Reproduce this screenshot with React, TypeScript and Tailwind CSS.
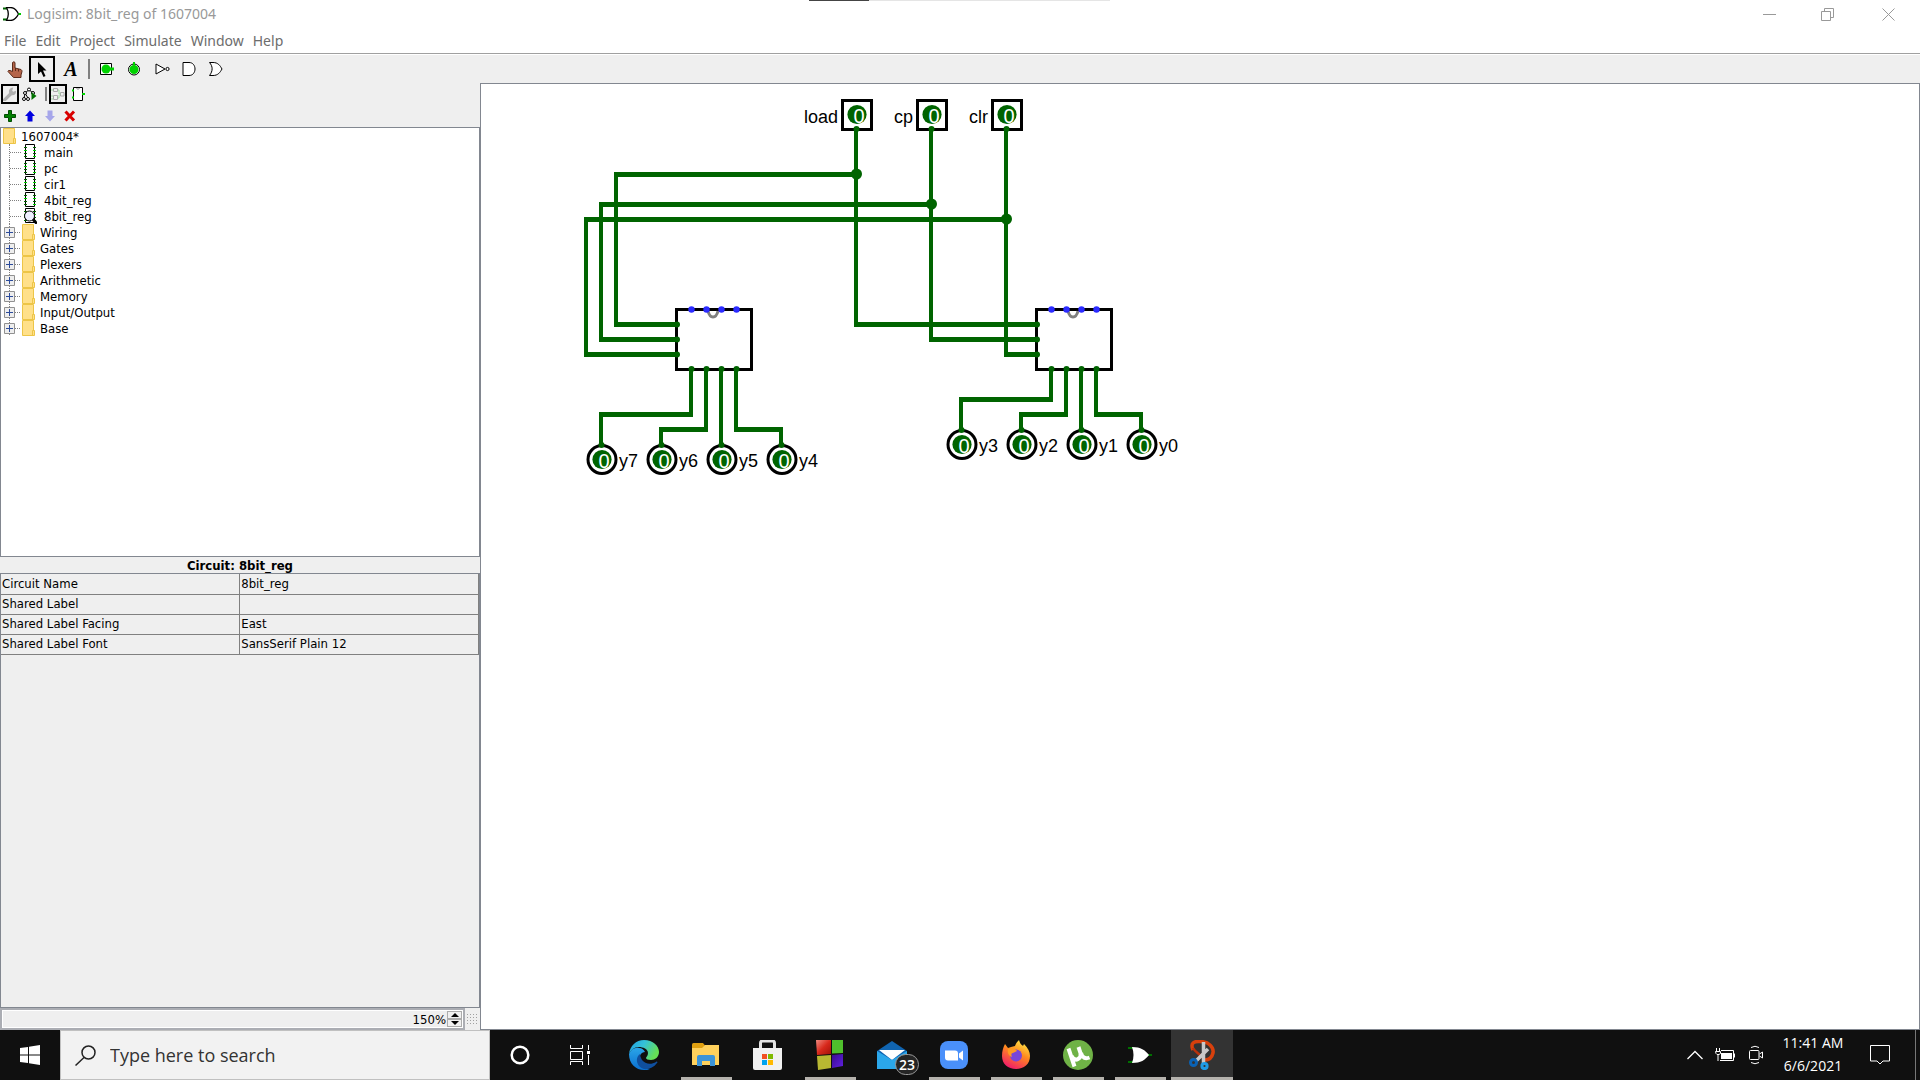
import React from "react";

const TAHOMA = "font-['DejaVu_Sans_Condensed','Noto_Sans',sans-serif]";

function OrGate({ className = "" }: { className?: string }) {
  return (
    <svg width="18" height="14" viewBox="0 0 18 14" className={className} fill="none">
      <path d="M0 1.500h4M0 12.500h4" stroke="#006400" strokeWidth="2" />
      <path d="M3.5 .5H8c4 .5 6 3 7.500 6.500C14 10 12 13 8 13.500H3.500C6 9 6 5 3.500 .5z" fill="#fff" stroke="#000" strokeWidth="1.300" />
      <path d="M15.500 7H18" stroke="#00c800" strokeWidth="2" />
    </svg>
  );
}

function TitleBar() {
  return (
    <header className="relative flex h-[28px] shrink-0 items-center bg-white pl-[3px]">
      <OrGate />
      <h1 className="ml-[6px] font-['Noto_Sans',sans-serif] text-[14px] leading-5 text-[#999]">Logisim: 8bit_reg of 1607004</h1>
      <div className="absolute left-[809px] top-0 flex h-px w-[301px] bg-[#e5e5e5]">
        <div className="h-px w-[60px] bg-[#444]" />
      </div>
      <div className="ml-auto flex h-full text-[#999]">
        <button aria-label="Minimize" className="flex w-[58px] items-center justify-center">
          <svg width="13" height="13" viewBox="0 0 13 13"><path d="M0 6.500h13" stroke="currentColor" /></svg>
        </button>
        <button aria-label="Restore" className="flex w-[58px] items-center justify-center">
          <svg width="13" height="13" viewBox="0 0 13 13" fill="none" stroke="currentColor"><path d="M.5 3.500h9v9h-9zM3.500 3V.5h9v9h-3" /></svg>
        </button>
        <button aria-label="Close" className="flex w-[64px] items-center justify-center">
          <svg width="13" height="13" viewBox="0 0 13 13"><path d="M.5.5l12 12M12.500.5l-12 12" stroke="currentColor" /></svg>
        </button>
      </div>
    </header>
  );
}

function MenuBar() {
  return (
    <nav className="flex h-[26px] shrink-0 items-center gap-[9px] border-b border-[#a0a0a0] bg-white pl-[4px] pt-px font-['Noto_Sans',sans-serif] text-[14px] leading-5 text-[#6d6d6d]">
      {["File", "Edit", "Project", "Simulate", "Window", "Help"].map((m) => (
        <button key={m}>{m}</button>
      ))}
    </nav>
  );
}

function Tool({ label, selected, children }: { label: string; selected?: boolean; children: React.ReactNode }) {
  return (
    <button
      aria-label={label}
      className={selected ? "flex h-[26px] w-[26px] items-center justify-center border-2 border-black" : "flex h-[26px] w-[26px] items-center justify-center"}
    >
      {children}
    </button>
  );
}

function MainToolbar() {
  return (
    <div className="mt-px flex h-[28px] shrink-0 items-center gap-px bg-[#efefef] pl-[2px]">
      <Tool label="Poke">
        <svg width="16" height="17" viewBox="0 0 16 17">
          <path d="M5.500 1.500q1.500-1.500 2.500 0V7l6 1.500q1 .5 1 2L14 14v2.500H6.500L1 10.500q0-1.500 2-1l2.500 1z" fill="#b5654a" stroke="#5a2a1a" />
          <path d="M8.500 7v3M11.500 8v2.500" stroke="#5a2a1a" />
        </svg>
      </Tool>
      <Tool label="Select" selected>
        <svg width="10" height="15" viewBox="0 0 10 15"><path d="M1 0v12l3-2.500L6.500 15 8.500 14 6 8.500h3.500z" /></svg>
      </Tool>
      <span className="w-px" />
      <Tool label="Text">
        <span className="font-['Liberation_Serif',serif] text-[20px] font-bold italic leading-none text-black">A</span>
      </Tool>
      <span className="mx-[3px] h-5 w-[2px] bg-[#808080]" />
      <Tool label="Input pin">
        <svg width="14" height="12" viewBox="0 0 14 12"><path d="M.5.500h11v11H.5z" fill="#fff" stroke="#000" /><circle cx="6" cy="6" r="4.500" fill="#00d200" /><path d="M9 6h5" stroke="#00d200" strokeWidth="3" /></svg>
      </Tool>
      <Tool label="Output pin">
        <svg width="14" height="14" viewBox="0 0 14 14"><circle cx="7" cy="7.500" r="5.500" fill="#fff" stroke="#000" /><circle cx="7" cy="7.500" r="4.500" fill="#00d200" /><path d="M7 0v5" stroke="#00d200" strokeWidth="2" /></svg>
      </Tool>
      <span />
      <Tool label="NOT gate">
        <svg width="15" height="12" viewBox="0 0 15 12" fill="#fff" stroke="#000"><path d="M1 1v10L10 6z" /><circle cx="12.500" cy="6" r="1.600" /></svg>
      </Tool>
      <div className="flex w-[53px]">
        <Tool label="AND gate">
          <svg width="14" height="14" viewBox="0 0 14 14" fill="#fff" stroke="#000"><path d="M1 .5h6c8 0 8 13 0 13H1z" /></svg>
        </Tool>
        <span className="w-[2px]" />
        <Tool label="OR gate">
          <svg width="14" height="14" viewBox="0 0 14 14" fill="#fff" stroke="#000"><path d="M.5.500H4c5 0 7 3 9 6.500-2 3.500-4 6.500-9 6.500H.5c3.500-4.500 3.500-9 0-13z" /></svg>
        </Tool>
      </div>
    </div>
  );
}

function ExplorerToolbars() {
  return (
    <>
      <div className="flex h-5 shrink-0 items-center pl-px">
        <button aria-label="Show toolbox" className="flex h-5 w-[18px] items-center justify-center border-2 border-black">
          <svg width="14" height="14" viewBox="0 0 13 13"><path d="M1.500 12 7 6.500" stroke="#b0b0b0" strokeWidth="3" strokeLinecap="round" /><path d="M12 3.500 9.500 4.500 8.500 3.500 9.500.5Q5 1 5.500 5 7 8 10 7.500 12.500 6.500 12 3.500z" fill="#b0b0b0" /></svg>
        </button>
        <button aria-label="Show simulation tree" className="flex w-[22px] justify-center">
          <svg width="16" height="14" viewBox="0 0 16 14" fill="#fff" stroke="#000"><path d="M6 3.500 3 6M8 3.500 11 6M3 7 2 11M3.500 7 6 11" /><circle cx="7" cy="2.500" r="1.500" /><circle cx="3" cy="6" r="1.500" /><circle cx="2" cy="12" r="1.500" /><circle cx="6" cy="12" r="1.500" /><circle cx="11" cy="6" r="1.500" /><path d="M9.500 5v8l5-4z" fill="#007000" stroke="none" /></svg>
        </button>
        <span className="ml-1 mr-[2px] h-[14px] w-[2px] bg-[#808080]" />
        <button aria-label="Edit circuit layout" className="flex h-5 w-[18px] items-center justify-center border-2 border-black">
          <svg width="14" height="14" viewBox="0 0 14 14" fill="none" stroke="#aaa"><path d="M2.500 1.500h4v3h-4zM2.500 8.500h4v4h-4zM9.500 5.500h3.500v3.500H9.500z" /><path d="M0 3h2M0 9h2M0 12h2M7 3h1v4h1.500M7 11h1V8" stroke="#9fdc9f" /></svg>
        </button>
        <button aria-label="Edit appearance" className="flex w-[22px] justify-center">
          <svg width="14" height="16" viewBox="0 0 14 16"><path d="M2.500 1.500h9v13h-9z" fill="#fff" stroke="#000" /><path d="M5.500 2q1.500 3 3 0" fill="none" stroke="#808080" /><path d="M1 4.500h2M1 11.500h2M11 8h3" stroke="#00d200" strokeWidth="2" /></svg>
        </button>
      </div>
      <div className="flex h-[23px] shrink-0 items-center gap-2 pl-1">
        <button aria-label="Add circuit"><svg width="12" height="12" viewBox="0 0 12 12"><path d="M4.500.5h3v4h4v3h-4v4h-3v-4h-4v-3h4z" fill="#008000" stroke="#004d00" /></svg></button>
        <button aria-label="Move up"><svg width="12" height="12" viewBox="0 0 12 12"><path d="M6 .5 11 6H8.500v5.500h-5V6H1z" fill="#0000e0" /></svg></button>
        <button aria-label="Move down"><svg width="12" height="12" viewBox="0 0 12 12"><path d="M6 11.500 11 6H8.500V.5h-5V6H1z" fill="#a6a6ea" /></svg></button>
        <button aria-label="Delete"><svg width="12" height="12" viewBox="0 0 12 12"><path d="M1.500 1.500 10 10.500M10 1.500 1.500 10.500" stroke="#d80000" strokeWidth="3" /></svg></button>
      </div>
    </>
  );
}

function ChipIcon({ current }: { current?: boolean }) {
  return (
    <svg width="14" height="16" viewBox="0 0 14 16">
      <path d="M2.500.5h9v14h-9z" fill="#fff" stroke="#000" />
      <path d="M1 3.500h3M1 6.500h3M1 9.500h3M1 12.500h3M10 3.500h3M10 9.500h3" stroke="#006400" />
      <path d="M1 6.500h3M10 6.500h3M10 12.500h3" stroke="#00d200" />
      {current && <><circle cx="6.500" cy="8" r="5" fill="#eef" stroke="#000" /><path d="M10 11.500l4 4" stroke="#000" strokeWidth="3" /></>}
    </svg>
  );
}

function FolderIcon() {
  return (
    <svg width="13" height="16" viewBox="0 0 13 16"><path d="M.5.500h11v10h1v5H.5z" fill="#ffe08a" stroke="#edc547" /><path d="M10.500 15v-4.500H12" fill="none" stroke="#edc547" /></svg>
  );
}

const CIRCUITS = ["main", "pc", "cir1", "4bit_reg", "8bit_reg"];
const LIBRARIES = ["Wiring", "Gates", "Plexers", "Arithmetic", "Memory", "Input/Output", "Base"];

function Tree() {
  return (
    <div className="h-[430px] shrink-0 border border-[#828790] bg-white text-[13px] leading-4 text-black">
      <div className="flex h-4 items-center gap-[5px] pl-[2px]"><FolderIcon /><span className="pt-px">1607004*</span></div>
      <ul>
        {CIRCUITS.map((c) => (
          <li key={c} className="flex h-4 items-center pl-2">
            <span className="flex h-4 w-3 items-center border-l border-dotted border-[#808080]"><span className="w-full border-t border-dotted border-[#808080]" /></span>
            <span className="ml-[2px] mr-[7px]"><ChipIcon current={c === "8bit_reg"} /></span>
            <span className="pt-px">{c}</span>
          </li>
        ))}
        {LIBRARIES.map((l) => (
          <li key={l} className="flex h-4 items-center pl-[3px]">
            <button aria-label={"Expand " + l}>
              <svg width="11" height="16" viewBox="0 0 11 16"><path d="M5.500 0v16" stroke="#808080" strokeDasharray="1 1" /><path d="M.5 3.500h10v10H.5z" fill="#eee" stroke="#919191" /><path d="M2 8.500h7M5.500 5v7" stroke="#2b4b9b" /></svg>
            </button>
            <span className="mr-[2px] w-[5px] border-t border-dotted border-[#808080]" />
            <FolderIcon />
            <span className="ml-[5px] pt-px">{l}</span>
          </li>
        ))}
      </ul>
    </div>
  );
}

const ATTRIBUTES = [
  ["Circuit Name", "8bit_reg"],
  ["Shared Label", ""],
  ["Shared Label Facing", "East"],
  ["Shared Label Font", "SansSerif Plain 12"],
];

function Attributes() {
  return (
    <section className="flex min-h-0 flex-1 flex-col text-[13px] text-black">
      <h2 className="h-4 shrink-0 text-center font-bold leading-[18px]">Circuit: 8bit_reg</h2>
      <div className="flex-1 border border-[#828790]">
        <table className="w-full table-fixed border-collapse">
          <tbody>
            {ATTRIBUTES.map(([k, v]) => (
              <tr key={k} className="h-5 border-b border-[#808080]">
                <th scope="row" className="border-r border-[#808080] pl-px text-left font-normal leading-4">{k}</th>
                <td className="border-r border-[#808080] pl-px leading-4">{v}</td>
              </tr>
            ))}
          </tbody>
        </table>
      </div>
    </section>
  );
}

function ZoomBar() {
  return (
    <div className="flex h-[22px] shrink-0">
      <div className="flex flex-1 border-2 border-[#abadb3] bg-white p-px">
        <input aria-label="Zoom" defaultValue="150%" className="min-w-0 flex-1 bg-[#efefef] pr-px pt-px text-right text-[13px] text-black outline-none" />
        <div className="flex w-[15px] flex-col">
          <button aria-label="Zoom in" className="flex flex-1 items-center justify-center border border-[#acacac] bg-[#f0f0f0]"><svg width="8" height="4" viewBox="0 0 8 4"><path d="M0 4l4-4 4 4z" /></svg></button>
          <button aria-label="Zoom out" className="flex flex-1 items-center justify-center border border-[#acacac] bg-[#f0f0f0]"><svg width="8" height="4" viewBox="0 0 8 4"><path d="M0 0l4 4 4-4z" /></svg></button>
        </div>
      </div>
      <svg width="15" height="22" viewBox="0 0 15 22">
        {[6.5, 9.5, 12.5, 15.5].map((y) => <path key={y} d={`M2 ${y}h12`} stroke="#a0a0a0" strokeDasharray="1 2" />)}
      </svg>
    </div>
  );
}

function Zero({ x, y }: { x: number; y: number }) {
  return (
    <>
      <circle cx={x} cy={y} r="9.600" fill="#006400" />
      <text x={x + 2} y={y + 8} textAnchor="middle" fill="#fff" fontSize="20">0</text>
    </>
  );
}

function InputPin({ x, label }: { x: number; label: string }) {
  return (
    <g>
      <rect x={x - 13.5} y="16.500" width="29" height="29" fill="#fff" stroke="#000" strokeWidth="3" />
      <Zero x={x + 1} y={30.5} />
      <circle cx={x + 0.5} cy="45" r="3" fill="#006400" />
      <text x={x - 18} y="39" textAnchor="end">{label}</text>
    </g>
  );
}

function OutputPin({ x, y, label }: { x: number; y: number; label: string }) {
  return (
    <g>
      <circle cx={x + 1} cy={y - 0.5} r="14" fill="#fff" stroke="#000" strokeWidth="3" />
      <Zero x={x + 1} y={y - 0.5} />
      <circle cx={x + 0.5} cy={y - 15} r="3" fill="#006400" />
      <text x={x + 18} y={y + 7}>{label}</text>
    </g>
  );
}

function Register({ x }: { x: number }) {
  return (
    <g>
      <rect x={x + 0.5} y="225.500" width="75" height="60" fill="#fff" stroke="#000" strokeWidth="3" />
      <path d={`M${x + 32} 227q1.500 6 5 6t5-6`} fill="none" stroke="#808080" strokeWidth="3" />
      {[15, 30, 45, 60].map((d) => (
        <g key={d}>
          <circle cx={x + d + 0.5} cy="225.500" r="3.200" fill="#2b2bff" />
          <circle cx={x + d + 0.5} cy="285" r="3" fill="#006400" />
        </g>
      ))}
      {[240.5, 255.5, 270.5].map((y) => <circle key={y} cx={x + 1} cy={y} r="3" fill="#006400" />)}
    </g>
  );
}

/** Vertical runs as [x, top, bottom]. */
const VERTICALS = [
  [375, 45, 243], [450, 45, 258], [525, 45, 273],
  [135, 88, 243], [120, 118, 258], [105, 133, 273],
  [210, 285, 333], [120, 328, 361], [225, 285, 348], [180, 343, 361],
  [240, 285, 361], [255, 285, 348], [300, 343, 361],
  [570, 285, 318], [480, 313, 346], [585, 285, 333], [540, 328, 346],
  [600, 285, 346], [615, 285, 333], [660, 328, 346],
];

/** Horizontal runs as [y, left, right]. */
const HORIZONTALS = [
  [90.5, 133, 377], [120.5, 118, 452], [135.5, 103, 527],
  [240.5, 133, 197], [255.5, 118, 197], [270.5, 103, 197],
  [240.5, 373, 557], [255.5, 448, 557], [270.5, 523, 557],
  [330.5, 118, 212], [345.5, 178, 227], [345.5, 253, 302],
  [315.5, 478, 572], [330.5, 538, 587], [330.5, 613, 662],
];

function Circuit() {
  return (
    <svg width="800" height="420" viewBox="0 0 800 420" className="font-['Liberation_Sans',sans-serif]" fontSize="18" role="img" aria-label="8bit_reg circuit">
      <Register x={195} />
      <Register x={555} />
      <g stroke="#006400">
        {VERTICALS.map(([x, a, b]) => <path key={`${x}-${a}`} d={`M${x} ${a}V${b}`} strokeWidth="4" />)}
        {HORIZONTALS.map(([y, a, b]) => <path key={`${y}-${a}`} d={`M${a} ${y}H${b}`} strokeWidth="5" />)}
      </g>
      <g fill="#006400">
        <circle cx="375.500" cy="90" r="5.500" /><circle cx="450.500" cy="120" r="5.500" /><circle cx="525.500" cy="135" r="5.500" />
      </g>
      <InputPin x={375} label="load" />
      <InputPin x={450} label="cp" />
      <InputPin x={525} label="clr" />
      {["y7", "y6", "y5", "y4"].map((l, i) => <OutputPin key={l} x={120 + i * 60} y={376} label={l} />)}
      {["y3", "y2", "y1", "y0"].map((l, i) => <OutputPin key={l} x={480 + i * 60} y={361} label={l} />)}
    </svg>
  );
}

function TaskButton({ label, open, active, children }: { label: string; open?: boolean; active?: boolean; children: React.ReactNode }) {
  return (
    <button aria-label={label} className={active ? "flex h-full w-[62px] flex-col items-center bg-[#333]" : "flex h-full w-[62px] flex-col items-center"}>
      <span className="flex flex-1 items-center justify-center pt-[3px]">{children}</span>
      <span className={active ? "h-[3px] w-full bg-[#b5b2ad]" : open ? "h-[3px] w-[51px] bg-[#b5b2ad]" : "h-[3px] w-full"} />
    </button>
  );
}

function Taskbar() {
  return (
    <footer className="flex h-[50px] shrink-0 bg-[#101010] font-['Open_Sans',sans-serif] text-white">
      <button aria-label="Start" className="flex w-[60px] items-center justify-center">
        <svg width="20" height="20" viewBox="0 0 20 20" fill="#fff"><path d="M0 3l8-1v7.500H0zM9 1.800 20 0v9.500H9zM0 10.500h8V18l-8-1zM9 10.500h11V20L9 18.300z" /></svg>
      </button>
      <label className="flex w-[430px] items-center border border-[#c0c0c0] bg-[#f2f2f2] pl-[14px]">
        <svg width="21" height="21" viewBox="0 0 21 21" fill="none" stroke="#222" strokeWidth="1.500"><circle cx="13.500" cy="7.500" r="6.500" /><path d="M9 12.500.5 20.500" /></svg>
        <input aria-label="Search" placeholder="Type here to search" className="ml-[14px] min-w-0 flex-1 bg-transparent text-[18px] leading-6 outline-none placeholder:text-[#333]" />
      </label>
      <button aria-label="Cortana" className="flex w-[60px] items-center justify-center"><svg width="20" height="20" viewBox="0 0 20 20"><circle cx="10" cy="10" r="8.300" fill="none" stroke="#fff" strokeWidth="2.500" /></svg></button>
      <button aria-label="Task view" className="mr-[3px] flex w-[60px] items-center justify-center">
        <svg width="20" height="20" viewBox="0 0 20 20" fill="none" stroke="#fff"><path d="M.5 0v3.500h12V0M.5 6.500h12v8H.5zM.5 20v-3.500h12V20M18.500 0v5M18.500 10v10" /><path d="M17 6h3v3h-3z" fill="#fff" stroke="none" /></svg>
      </button>
      <TaskButton label="Edge">
        <svg width="30" height="30" viewBox="0 0 30 30">
          <defs>
            <linearGradient id="edgeTop" x1="0" x2="1" y1="0" y2=".4"><stop offset="0" stopColor="#1b9de2" /><stop offset=".5" stopColor="#35c1d8" /><stop offset="1" stopColor="#65e055" /></linearGradient>
            <linearGradient id="edgeSide" x1="0" x2="0" y1="0" y2="1"><stop offset="0" stopColor="#2aa5e8" /><stop offset="1" stopColor="#0b6fd0" /></linearGradient>
          </defs>
          <path d="M0 14C1 6 7 0 15 0c9 0 15 6 15 12 0 5-4 8-8 8-3 0-5-1-5-2s2-2 2-5c0-4-5-6-9-6-5 0-8 3-10 7z" fill="url(#edgeTop)" />
          <path d="M0 14c2-5 6-7 10-6 3 0 5 2 6 4-4 0-6 4-5 8 1 5 5 9 10 9-2 1-4 1-6 1C7 30 0 24 0 14z" fill="url(#edgeSide)" />
          <path d="M11 14c-4 3-4 8-1 12 4 5 13 4 18-3 1-1 0-2-1-1-5 3-11 2-14-2-1-2-2-4-2-6z" fill="#0f4f9e" />
        </svg>
      </TaskButton>
      <TaskButton label="File Explorer" open>
        <svg width="28" height="24" viewBox="0 0 28 24"><path d="M0 1.500Q0 0 1.500 0H11l2 2.500V7H0z" fill="#e0a010" /><path d="M0 5h10l3-3h14v20H0z" fill="#ffd15c" /><path d="M5 23V14q0-2 2-2h14q2 0 2 2v9h-5v-5h-8v5z" fill="#3c94d8" /></svg>
      </TaskButton>
      <TaskButton label="Microsoft Store">
        <svg width="30" height="30" viewBox="0 0 30 30"><path d="M7.500 9V3q0-2 2-2h10q2 0 2 2v6" fill="none" stroke="#e4e4e4" strokeWidth="3" /><path d="M0 8h29v20q0 2-2 2H2q-2 0-2-2z" fill="#f1f1f1" /><path d="M9 14h5v5H9z" fill="#f25022" /><path d="M15 14h5v5h-5z" fill="#7fba00" /><path d="M9 20h5v5H9z" fill="#00a4ef" /><path d="M15 20h5v5h-5z" fill="#ffb900" /></svg>
      </TaskButton>
      <TaskButton label="Color panes" open>
        <svg width="28" height="30" viewBox="0 0 28 30">
          <defs>
            <linearGradient id="paneRed" x1="0" x2="1" y1="0" y2="1"><stop offset="0" stopColor="#f08a80" /><stop offset=".5" stopColor="#d8291c" /><stop offset="1" stopColor="#a01008" /></linearGradient>
            <linearGradient id="paneViolet" x1="0" x2="1" y1="0" y2="1"><stop offset="0" stopColor="#3a0a90" /><stop offset="1" stopColor="#6020e0" /></linearGradient>
          </defs>
          <path d="M0 0h15v14L1 15z" fill="url(#paneRed)" /><path d="M16 0h11v13l-11 .5z" fill="#4fc02c" /><path d="M1 16l14-1v13L2 30z" fill="#b8b832" /><path d="M16 15l11-1v12l-11 2z" fill="url(#paneViolet)" />
        </svg>
      </TaskButton>
      <TaskButton label="Mail">
        <span className="relative">
          <svg width="30" height="28" viewBox="0 0 30 28"><path d="M0 10 15 0l15 10v18H0z" fill="#1064b0" /><path d="M2 9h26L15 19z" fill="#fff" /><path d="M0 10l15 9 15-9v18H0z" fill="#2ba7ea" /></svg>
          <span className="absolute left-[18px] top-[13px] flex h-[21px] w-6 items-center justify-center rounded-full border border-[#999] bg-[#252525] text-[14px] font-semibold leading-4">23</span>
        </span>
      </TaskButton>
      <TaskButton label="Zoom" open>
        <svg width="28" height="28" viewBox="0 0 28 28"><rect width="28" height="28" rx="8" fill="#4a90fa" /><path d="M5 9.500h10q3 0 3 3v7H8q-3 0-3-3zM19 12.500l4-3v10l-4-3z" fill="#fff" /></svg>
      </TaskButton>
      <TaskButton label="Firefox" open>
        <svg width="30" height="30" viewBox="0 0 30 30">
          <defs><linearGradient id="fox" x1=".8" x2=".3" y1="0" y2="1"><stop offset="0" stopColor="#fff04a" /><stop offset=".45" stopColor="#ff8a1e" /><stop offset="1" stopColor="#f0186c" /></linearGradient></defs>
          <path d="M4 4l3 4 3-1 4-1c1-3 3-5 4-6 1 4 3 5 4 6l1-2c4 4 6 8 6 12 0 8-6 13-14 13S1 24 1 16c0-5 1-8 3-12z" fill="url(#fox)" />
          <circle cx="15" cy="15.500" r="6" fill="#7846d8" /><path d="M7 9c4-2 8 0 9 2l-4 2c-2 0-2 2-1 4-3-1-5-4-4-8z" fill="#ff9a20" />
        </svg>
      </TaskButton>
      <TaskButton label="uTorrent" open>
        <svg width="30" height="30" viewBox="0 0 30 30"><circle cx="15" cy="15" r="15" fill="#6fb246" /><path d="M5.500 8.500l6 18M8.500 16q3 5 6.500 3t2.500-6l-2-6M18 13q2 7 8.500 4.500" fill="none" stroke="#fff" strokeWidth="4" /></svg>
      </TaskButton>
      <TaskButton label="Logisim" open>
        <svg width="26" height="18" viewBox="0 0 26 18"><path d="M1 2h5M1 16h5M20 9h5" stroke="#007000" strokeWidth="2" /><path d="M5 1c9 0 13 3 17 8-4 5-8 8-17 8 2-5 2-11 0-16z" fill="#fff" /></svg>
      </TaskButton>
      <TaskButton label="Snipping Tool" open active>
        <svg width="26" height="30" viewBox="0 0 26 30" fill="none">
          <path d="M4 10C1 3 5 1 11 1.500c9 0 14 6 13 11.500-1 4-4 7-8 7" stroke="#d8400c" strokeWidth="3.500" /><path d="M4 8c2 4 6 5 10 10" stroke="#b8320c" strokeWidth="2.500" />
          <path d="M14.500 2v21M19 9 7 21" stroke="#c9c9c9" strokeWidth="3.500" /><circle cx="4.500" cy="22.500" r="3" stroke="#0a62b4" strokeWidth="3" /><circle cx="15.500" cy="26" r="2.600" stroke="#1f9be6" strokeWidth="3" />
        </svg>
      </TaskButton>
      <div className="ml-auto flex items-center">
        <button aria-label="Show hidden icons" className="mr-[12px]"><svg width="16" height="10" viewBox="0 0 16 10"><path d="M.5 9 8 1.500 15.500 9" fill="none" stroke="#fff" strokeWidth="1.300" /></svg></button>
        <button aria-label="Battery" className="mr-[14px]">
          <svg width="20" height="14" viewBox="0 0 20 14" fill="none" stroke="#fff"><path d="M6 2.500h12.500v10H5" /><path d="M6 5h11v6H6z" fill="#fff" stroke="none" /><path d="M19.500 5.500v4M1.500 0v3M4.500 0v3M.5 3.500h5v2l-1.500 1h-2l-1-1zM3 6v7" /></svg>
        </button>
        <button aria-label="Meet now" className="mr-[17px]">
          <svg width="15" height="20" viewBox="0 0 15 20" fill="none" stroke="#fff"><rect x=".5" y="5.500" width="9.500" height="9" rx="1" /><path d="M10.500 9l3-2v6l-3-2M2 2.500q4-2.500 8 0M2 17.500q4 2.500 8 0" /></svg>
        </button>
        <button className="w-[64px] pb-[2px] text-center text-[14px] leading-[23px]"><span className="block whitespace-nowrap">11:41 AM</span><span className="block whitespace-nowrap">6/6/2021</span></button>
        <button aria-label="Notifications" className="ml-[25px] mr-[25px]"><svg width="20" height="20" viewBox="0 0 20 20" fill="none" stroke="#fff"><path d="M.5.500h19v15.500H13l-3 3-3-3H.5z" /></svg></button>
        <button aria-label="Show desktop" className="h-[50px] w-[5px] border-l border-[#777]" />
      </div>
    </footer>
  );
}

export default function App() {
  return (
    <div className="flex h-screen flex-col overflow-hidden bg-white">
      <TitleBar />
      <MenuBar />
      <MainToolbar />
      <div className="flex min-h-0 flex-1 bg-[#efefef]">
        <aside className={`flex w-[480px] shrink-0 flex-col pt-px ${TAHOMA}`}>
          <ExplorerToolbars />
          <Tree />
          <Attributes />
          <ZoomBar />
        </aside>
        <main className="min-w-0 flex-1 border border-[#828790] bg-white">
          <Circuit />
        </main>
      </div>
      <Taskbar />
    </div>
  );
}
